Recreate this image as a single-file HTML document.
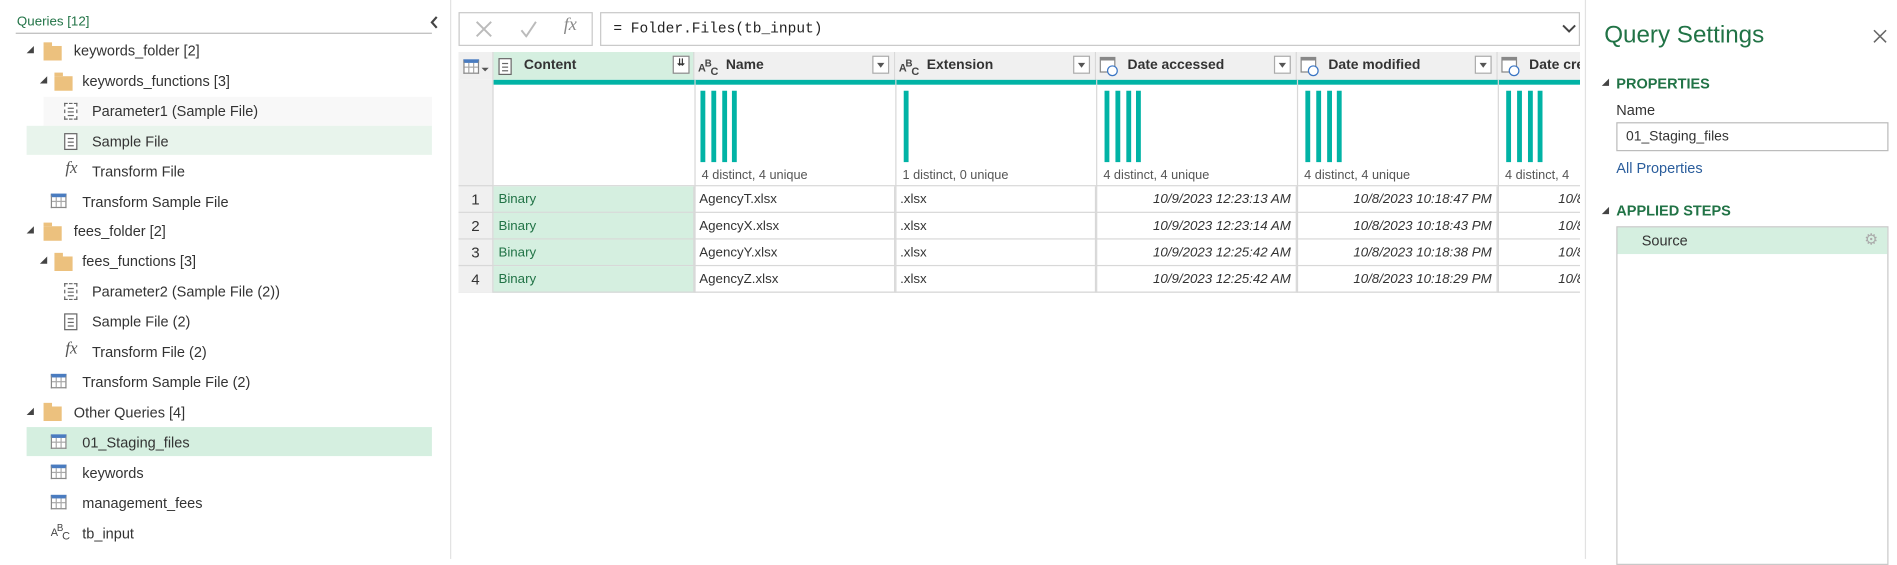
<!DOCTYPE html>
<html><head><meta charset="utf-8"><style>
html,body{margin:0;padding:0;width:1897px;height:559px;overflow:hidden;background:#fff}
#w{position:absolute;left:0;top:0;width:1568px;height:462px;transform:scale(1.2098);transform-origin:0 0;font-family:"Liberation Sans",sans-serif;color:#333;font-size:12px}
.a{position:absolute;white-space:nowrap}
.row{position:absolute;height:24px;line-height:24px}
.tri{position:absolute;width:0;height:0;border-left:6px solid transparent;border-bottom:6px solid #444}
.fold{position:absolute;width:15px;height:12px;background:#ecc17e}
.fold:before{content:"";position:absolute;left:0;top:-3px;width:7px;height:3px;background:#ecc17e}
.tbl{position:absolute;width:13px;height:12px;border:1px solid #888;border-top:3px solid #4a7cc0;box-sizing:border-box;background:
linear-gradient(#aaa,#aaa) 3px 0/1px 100% no-repeat,linear-gradient(#aaa,#aaa) 7px 0/1px 100% no-repeat,linear-gradient(#aaa,#aaa) 0 3px/100% 1px no-repeat,#fff}
.doc{position:absolute;width:11px;height:14px;border:1px solid #666;box-sizing:border-box;background:linear-gradient(#666,#666) 2px 3px/5px 1px no-repeat,linear-gradient(#666,#666) 2px 6px/5px 1px no-repeat,linear-gradient(#666,#666) 2px 9px/5px 1px no-repeat,#fff}
.fx{position:absolute;font-family:"Liberation Serif",serif;font-style:italic;color:#555;font-size:14px}
.abc{position:absolute;font-size:9px;color:#444;letter-spacing:-1px}
.hdr{position:absolute;top:43px;height:23px;background:#f0f0f0;border-right:1px solid #d8d8d8;box-sizing:border-box;font-weight:bold;font-size:11.5px;line-height:23px;white-space:nowrap}
.dd{position:absolute;top:3px;width:14px;height:15px;border:1px solid #aaa;background:#fff;box-sizing:border-box}
.dd:after{content:"";position:absolute;left:3px;top:5px;border-left:3px solid transparent;border-right:3px solid transparent;border-top:4px solid #555}
.bar{position:absolute;top:75px;width:4px;height:59px;background:#01b3a5}
.cell{position:absolute;height:22px;line-height:22px;font-size:11px;border-right:1px solid #d8d8d8;border-bottom:1px solid #d8d8d8;box-sizing:border-box;padding:0 4px;overflow:hidden;white-space:nowrap}
.dt{font-style:italic;text-align:right}
.cal{position:absolute;top:4px;width:13px;height:13px;border:1px solid #888;box-sizing:border-box;border-top:3px solid #888;background:#fff}
.cal:after{content:"";position:absolute;left:5px;top:4px;width:7px;height:7px;border-radius:50%;border:1px solid #3a75c4;background:#fff}
</style></head><body><div id="w">
<div class="a" style="left:14px;top:12px;color:#217346;font-size:11px">Queries [12]</div>
<div class="a" style="left:13px;top:27px;width:344px;height:1px;background:#bbb"></div>
<svg class="a" style="left:355px;top:13px" width="8" height="11"><path d="M6 1L2 5.5L6 10" stroke="#444" stroke-width="1.8" fill="none"/></svg>
<div class="a" style="left:372px;top:0;width:1px;height:462px;background:#e2e2e2"></div>

<div class="row" style="left:36px;top:80px;width:321px;background:#f8f8f8"></div>
<div class="row" style="left:22px;top:104px;width:335px;background:#e8f4ec"></div>
<div class="row" style="left:22px;top:353px;width:335px;background:#d5efe0"></div>

<div class="tri" style="left:22px;top:38px"></div><div class="fold" style="left:36px;top:38px"></div><div class="a" style="left:61px;top:35px">keywords_folder [2]</div>
<div class="tri" style="left:33px;top:63px"></div><div class="fold" style="left:45px;top:63px"></div><div class="a" style="left:68px;top:60px">keywords_functions [3]</div>
<div class="doc" style="left:53px;top:85px;border-style:dashed"></div><div class="a" style="left:76px;top:85px">Parameter1 (Sample File)</div>
<div class="doc" style="left:53px;top:110px"></div><div class="a" style="left:76px;top:110px">Sample File</div>
<div class="fx" style="left:54px;top:132px">fx</div><div class="a" style="left:76px;top:135px">Transform File</div>
<div class="tbl" style="left:42px;top:160px"></div><div class="a" style="left:68px;top:160px">Transform Sample File</div>
<div class="tri" style="left:22px;top:187px"></div><div class="fold" style="left:36px;top:187px"></div><div class="a" style="left:61px;top:184px">fees_folder [2]</div>
<div class="tri" style="left:33px;top:212px"></div><div class="fold" style="left:45px;top:212px"></div><div class="a" style="left:68px;top:209px">fees_functions [3]</div>
<div class="doc" style="left:53px;top:234px;border-style:dashed"></div><div class="a" style="left:76px;top:234px">Parameter2 (Sample File (2))</div>
<div class="doc" style="left:53px;top:259px"></div><div class="a" style="left:76px;top:259px">Sample File (2)</div>
<div class="fx" style="left:54px;top:281px">fx</div><div class="a" style="left:76px;top:284px">Transform File (2)</div>
<div class="tbl" style="left:42px;top:309px"></div><div class="a" style="left:68px;top:309px">Transform Sample File (2)</div>
<div class="tri" style="left:22px;top:337px"></div><div class="fold" style="left:36px;top:336px"></div><div class="a" style="left:61px;top:334px">Other Queries [4]</div>
<div class="tbl" style="left:42px;top:359px"></div><div class="a" style="left:68px;top:359px">01_Staging_files</div>
<div class="tbl" style="left:42px;top:384px"></div><div class="a" style="left:68px;top:384px">keywords</div>
<div class="tbl" style="left:42px;top:409px"></div><div class="a" style="left:68px;top:409px">management_fees</div>
<div class="abc" style="left:42px;top:432px">A<sup style="font-size:8px">B</sup><sub style="font-size:9px">C</sub></div><div class="a" style="left:68px;top:434px">tb_input</div>

<div class="a" style="left:379px;top:10px;width:111px;height:28px;border:1px solid #c8c8c8;box-sizing:border-box;background:#fff"></div>
<svg class="a" style="left:393px;top:17px" width="14" height="14"><path d="M1 1L13 13M13 1L1 13" stroke="#bbb" stroke-width="1.6"/></svg>
<svg class="a" style="left:430px;top:17px" width="14" height="14"><path d="M1 8L5 13L13 1" stroke="#bbb" stroke-width="1.6" fill="none"/></svg>
<div class="a" style="left:466px;top:13px;font-family:'Liberation Serif',serif;font-style:italic;font-size:15px;color:#888">fx</div>
<div class="a" style="left:496px;top:10px;width:810px;height:28px;border:1px solid #c8c8c8;box-sizing:border-box;background:#fff"></div>
<div class="a" style="left:507px;top:17px;font-family:'Liberation Mono',monospace;font-size:12px;color:#222">= Folder.Files(tb_input)</div>
<svg class="a" style="left:1291px;top:20px" width="12" height="8"><path d="M1 1L6 6L11 1" stroke="#444" stroke-width="1.6" fill="none"/></svg>

<div class="a" style="left:379px;top:43px;width:927px;height:199px;border-left:1px solid #d8d8d8;border-bottom:1px solid #d8d8d8;box-sizing:border-box"></div>
<div class="hdr" style="left:379px;width:29px"></div>
<div class="tbl" style="left:383px;top:49px;border-top-color:#4a7cc0"></div>
<div class="a" style="left:398px;top:56px;border-left:3px solid transparent;border-right:3px solid transparent;border-top:3px solid #555"></div>
<div class="a" style="left:379px;top:66px;width:29px;height:176px;background:#f0f0f0;border-right:1px solid #d8d8d8;box-sizing:border-box"></div>
<div class="a" style="left:379px;top:153px;width:29px;height:1px;background:#d8d8d8"></div>

<div class="hdr" style="left:408px;width:166px;background:#d5efe0"><div class="doc" style="left:4px;top:5px"></div><span style="position:absolute;left:25px">Content</span><div class="a" style="left:148px;top:3px;width:14px;height:15px;border:1px solid #888;box-sizing:border-box;background:#fff;font-size:8px;line-height:10px;text-align:center">⇊</div></div>
<div class="hdr" style="left:574px;width:166px"><span class="abc" style="left:3px;top:-2px">A<sup style="font-size:8px">B</sup><sub style="font-size:9px">C</sub></span><span style="position:absolute;left:26px">Name</span><div class="dd" style="left:147px"></div></div>
<div class="hdr" style="left:740px;width:166px"><span class="abc" style="left:3px;top:-2px">A<sup style="font-size:8px">B</sup><sub style="font-size:9px">C</sub></span><span style="position:absolute;left:26px">Extension</span><div class="dd" style="left:147px"></div></div>
<div class="hdr" style="left:906px;width:166px"><div class="cal" style="left:3px"></div><span style="position:absolute;left:26px">Date accessed</span><div class="dd" style="left:147px"></div></div>
<div class="hdr" style="left:1072px;width:166px"><div class="cal" style="left:3px"></div><span style="position:absolute;left:26px">Date modified</span><div class="dd" style="left:147px"></div></div>
<div class="hdr" style="left:1238px;width:68px;border-right:none;overflow:hidden"><div class="cal" style="left:3px"></div><span style="position:absolute;left:26px">Date created</span></div>
<div class="a" style="left:408px;top:66px;width:898px;height:4px;background:#01b3a5"></div>
<div class="a" style="left:574px;top:66px;width:1px;height:176px;background:#d8d8d8"></div>
<div class="a" style="left:740px;top:66px;width:1px;height:176px;background:#d8d8d8"></div>
<div class="a" style="left:906px;top:66px;width:1px;height:176px;background:#d8d8d8"></div>
<div class="a" style="left:1072px;top:66px;width:1px;height:176px;background:#d8d8d8"></div>
<div class="a" style="left:1238px;top:66px;width:1px;height:176px;background:#d8d8d8"></div>
<div class="a" style="left:408px;top:153px;width:898px;height:1px;background:#d8d8d8"></div>

<div class="bar" style="left:579px"></div><div class="bar" style="left:588px"></div><div class="bar" style="left:597px"></div><div class="bar" style="left:605px"></div>
<div class="bar" style="left:747px"></div>
<div class="bar" style="left:913px"></div><div class="bar" style="left:922px"></div><div class="bar" style="left:931px"></div><div class="bar" style="left:939px"></div>
<div class="bar" style="left:1079px"></div><div class="bar" style="left:1088px"></div><div class="bar" style="left:1097px"></div><div class="bar" style="left:1105px"></div>
<div class="bar" style="left:1245px"></div><div class="bar" style="left:1254px"></div><div class="bar" style="left:1263px"></div><div class="bar" style="left:1271px"></div>
<div class="a" style="left:580px;top:139px;font-size:10.5px;color:#555">4 distinct, 4 unique</div>
<div class="a" style="left:746px;top:139px;font-size:10.5px;color:#555">1 distinct, 0 unique</div>
<div class="a" style="left:912px;top:139px;font-size:10.5px;color:#555">4 distinct, 4 unique</div>
<div class="a" style="left:1078px;top:139px;font-size:10.5px;color:#555">4 distinct, 4 unique</div>
<div class="a" style="left:1244px;top:139px;font-size:10.5px;color:#555">4 distinct, 4</div>

<div style="position:absolute;left:379px;top:154px;width:927px;overflow:hidden;height:88px">
<div class="cell" style="left:0;top:0;width:29px;text-align:center;font-size:12.5px">1</div>
<div class="cell" style="left:0;top:22px;width:29px;text-align:center;font-size:12.5px">2</div>
<div class="cell" style="left:0;top:44px;width:29px;text-align:center;font-size:12.5px">3</div>
<div class="cell" style="left:0;top:66px;width:29px;text-align:center;font-size:12.5px;border-bottom:none">4</div>
<div class="cell" style="left:29px;top:0;width:166px;background:#d5efe0;color:#217346">Binary</div>
<div class="cell" style="left:29px;top:22px;width:166px;background:#d5efe0;color:#217346">Binary</div>
<div class="cell" style="left:29px;top:44px;width:166px;background:#d5efe0;color:#217346">Binary</div>
<div class="cell" style="left:29px;top:66px;width:166px;background:#d5efe0;color:#217346">Binary</div>
<div class="cell" style="left:195px;top:0;width:166px">AgencyT.xlsx</div>
<div class="cell" style="left:195px;top:22px;width:166px">AgencyX.xlsx</div>
<div class="cell" style="left:195px;top:44px;width:166px">AgencyY.xlsx</div>
<div class="cell" style="left:195px;top:66px;width:166px">AgencyZ.xlsx</div>
<div class="cell" style="left:361px;top:0;width:166px">.xlsx</div>
<div class="cell" style="left:361px;top:22px;width:166px">.xlsx</div>
<div class="cell" style="left:361px;top:44px;width:166px">.xlsx</div>
<div class="cell" style="left:361px;top:66px;width:166px">.xlsx</div>
<div class="cell dt" style="left:527px;top:0;width:166px">10/9/2023 12:23:13 AM</div>
<div class="cell dt" style="left:527px;top:22px;width:166px">10/9/2023 12:23:14 AM</div>
<div class="cell dt" style="left:527px;top:44px;width:166px">10/9/2023 12:25:42 AM</div>
<div class="cell dt" style="left:527px;top:66px;width:166px">10/9/2023 12:25:42 AM</div>
<div class="cell dt" style="left:693px;top:0;width:166px">10/8/2023 10:18:47 PM</div>
<div class="cell dt" style="left:693px;top:22px;width:166px">10/8/2023 10:18:43 PM</div>
<div class="cell dt" style="left:693px;top:44px;width:166px">10/8/2023 10:18:38 PM</div>
<div class="cell dt" style="left:693px;top:66px;width:166px">10/8/2023 10:18:29 PM</div>
<div class="cell dt" style="left:859px;top:0;width:166px;text-align:left;padding-left:50px">10/8/2023</div>
<div class="cell dt" style="left:859px;top:22px;width:166px;text-align:left;padding-left:50px">10/8/2023</div>
<div class="cell dt" style="left:859px;top:44px;width:166px;text-align:left;padding-left:50px">10/8/2023</div>
<div class="cell dt" style="left:859px;top:66px;width:166px;text-align:left;padding-left:50px">10/8/2023</div>
</div>

<div class="a" style="left:1310px;top:0;width:1px;height:462px;background:#e2e2e2"></div>
<div class="a" style="left:1326px;top:18px;font-size:20px;color:#217346">Query Settings</div>
<svg class="a" style="left:1548px;top:24px" width="12" height="12"><path d="M1 1L11 11M11 1L1 11" stroke="#666" stroke-width="1.3"/></svg>
<div class="tri" style="left:1324px;top:65px"></div>
<div class="a" style="left:1336px;top:62px;font-size:12px;font-weight:bold;color:#217346">PROPERTIES</div>
<div class="a" style="left:1336px;top:84px;font-size:12px">Name</div>
<div class="a" style="left:1336px;top:101px;width:225px;height:24px;border:1px solid #bbb;box-sizing:border-box;font-size:11.5px;line-height:22px;padding-left:7px">01_Staging_files</div>
<div class="a" style="left:1336px;top:132px;font-size:12px;color:#2a5d9c">All Properties</div>
<div class="tri" style="left:1324px;top:171px"></div>
<div class="a" style="left:1336px;top:167px;font-size:12px;font-weight:bold;color:#217346">APPLIED STEPS</div>
<div class="a" style="left:1336px;top:187px;width:225px;height:280px;border:1px solid #c8c8c8;box-sizing:border-box"></div>
<div class="a" style="left:1337px;top:188px;width:223px;height:22px;background:#d5efe0"></div>
<div class="a" style="left:1357px;top:192px;font-size:12px">Source</div>
<div class="a" style="left:1541px;top:190px;font-size:13px;color:#aaa">⚙</div>
</div></body></html>
